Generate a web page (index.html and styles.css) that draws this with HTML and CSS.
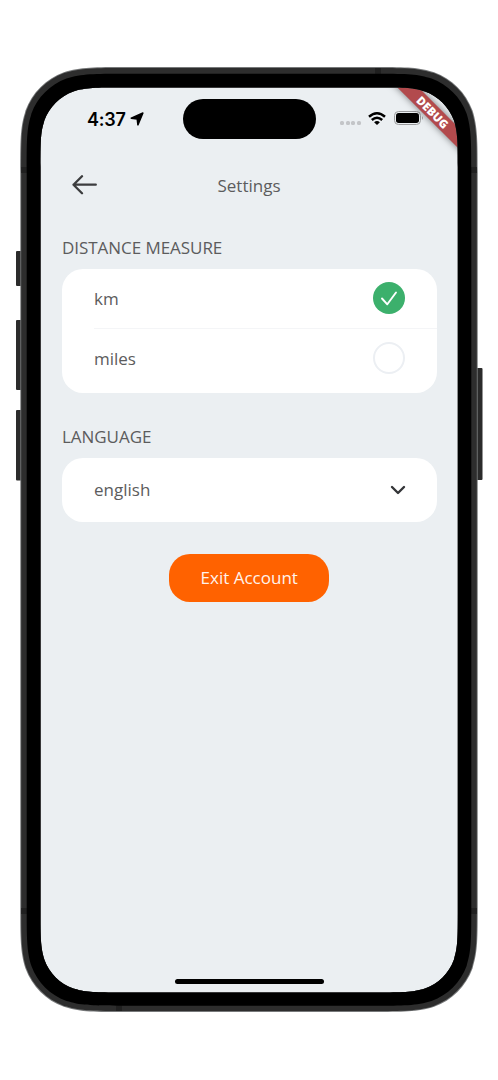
FILE: index.html
```html
<!DOCTYPE html>
<html lang="en">
<head>
<meta charset="utf-8">
<title>Settings</title>
<link rel="stylesheet" href="styles.css">
</head>
<body>
<div class="device">
  <main class="screen">
    <header class="status">
      <div class="status-time">4:37
        <svg class="location" viewBox="0 0 14 14"><path d="M12.900 1 7.900 12.900 7.200 6.900 1.200 6.200Z" stroke="#000" stroke-width="1.500" stroke-linejoin="round"/></svg>
      </div>
      <div class="island"></div>
      <div class="status-icons">
        <span class="cell"><i></i><i></i><i></i><i></i></span>
        <svg class="wifi" viewBox="0 0 18 13"><g fill="none" stroke="#000" stroke-width="2.500"><path d="M1 4.800Q9-2.200 17 4.800"/><path d="M3.800 8Q9 3.400 14.200 8"/></g><path d="M6.100 10.200Q9 7.700 11.900 10.200L9 13Z"/></svg>
        <svg class="battery" viewBox="0 0 30 14"><rect x=".5" y=".5" width="26" height="13" rx="4" fill="none" stroke="#9a9b9d"/><rect x="2" y="2" width="23" height="10" rx="2.700"/><path d="M28 4.800Q29.600 7 28 9.200Z" fill="#888"/></svg>
      </div>
    </header>
    <nav class="bar">
      <svg class="back" viewBox="0 0 26 20"><path d="M23.800 9.700H1.500M10 1.200 1.500 9.700l8.500 8.500"/></svg>
      <h1>Settings</h1>
    </nav>
    <section class="content">
      <h2>DISTANCE MEASURE</h2>
      <div class="card">
        <div class="row"><span>km</span><svg class="radio" viewBox="0 0 32 32"><circle cx="16" cy="16" r="16" fill="#3cb06c"/><path d="m9 16.500 5.300 5.800L23 10.500" fill="none" stroke="#fff" stroke-width="1.900" stroke-linecap="round" stroke-linejoin="round"/></svg></div>
        <div class="divider"></div>
        <div class="row"><span>miles</span><svg class="radio" viewBox="0 0 32 32"><circle cx="16" cy="16" r="15" fill="#fff" stroke="#eceff3" stroke-width="2"/></svg></div>
      </div>
      <h2 class="language">LANGUAGE</h2>
      <div class="card select"><span>english</span><svg class="chevron" viewBox="0 0 16 10"><path d="m2 2 6 6 6-6"/></svg></div>
      <button class="exit">Exit Account</button>
    </section>
    <div class="home"></div>
    <div class="debug">DEBUG</div>
  </main>
  <svg class="frame" viewBox="0 0 498 1080">
    <g fill="#2b2b2b">
      <rect x="16" y="251" width="6" height="35" rx="1"/>
      <rect x="16" y="320" width="6" height="70" rx="1"/>
      <rect x="16" y="410" width="6" height="70.500" rx="1"/>
      <rect x="476" y="368" width="6.500" height="112" rx="1"/>
    </g>
    <path id="edge" fill="#77797a" fill-rule="evenodd"/>
    <path id="body" fill="#2d2d2d" fill-rule="evenodd"/>
    <g fill="#202020">
      <rect x="375" y="68" width="6" height="6"/>
      <rect x="116" y="1005.500" width="6" height="5.500"/>
      <rect x="21.200" y="167" width="6" height="6"/>
      <rect x="471" y="167" width="5.800" height="6"/>
      <rect x="21.200" y="908" width="6" height="6"/>
      <rect x="471" y="908" width="5.800" height="6"/>
    </g>
    <path id="bezel" fill="#000" fill-rule="evenodd"/>
  </svg>
</div>
<script src="frame.js"></script>
</body>
</html>
```
FILE: styles.css
```css
* { box-sizing: border-box; }
body { margin: 0; background: #fff; font-family: "Open Sans", sans-serif; color: #5c5c5d; }
.device { position: relative; width: 498px; height: 1080px; padding: 87px 40px; }
.frame { position: absolute; inset: 0; width: 498px; height: 1080px; pointer-events: none; }
.screen { position: relative; width: 418px; height: 906px; overflow: hidden; background: #ebeff2; clip-path: inset(0 round 44px); }
.status { display: grid; grid-template-columns: 143px 133px 1fr; height: 64px; padding-top: 12px; }
.status-time { display: flex; align-items: center; gap: 4px; height: 40px; padding-left: 47px; font: 600 18px Inter, sans-serif; letter-spacing: -.2px; color: #000; }
.location { width: 14px; height: 14px; }
.island { height: 40px; border-radius: 20px; background: #000; }
.status-icons { display: flex; align-items: center; height: 38px; padding-left: 24px; }
.cell { display: flex; gap: 1.600px; margin: 10px 7.500px 0 0; }
.cell i { width: 4px; height: 4px; border-radius: 1.500px; background: #c3c5c8; }
.wifi { width: 18px; height: 13px; margin-right: 8px; }
.battery { width: 30px; height: 14px; }
.bar { display: grid; grid-template-columns: 32px 1fr 32px; align-items: center; height: 40px; margin: 14px 25px 0 32px; }
.back { width: 26px; height: 20px; fill: none; stroke: #3c3d3f; stroke-width: 2.300; stroke-linecap: round; stroke-linejoin: round; }
h1, h2 { margin: 0; font-weight: 400; }
h1 { font-size: 17px; line-height: 24px; text-align: center; padding: 1px 7px 0 0; }
.content { display: flex; flex-direction: column; padding: 31px 21.500px 0 22px; font-size: 17px; }
h2 { font-size: 17px; line-height: 24px; letter-spacing: -.05px; }
.card { margin-top: 9px; border-radius: 21px; background: #fff; }
.row { display: flex; justify-content: space-between; align-items: center; height: 58.500px; padding: 0 31.500px 0 32px; }
.row:last-child { height: 63.500px; padding-bottom: 5px; }
.radio { width: 32px; height: 32px; }
.divider { height: 1.500px; margin-left: 32px; background: #f4f5f7; }
.language { margin-top: 32px; }
.select { display: flex; align-items: center; justify-content: space-between; height: 64px; padding: 0 31px 0 32px; }
.chevron { width: 16px; height: 10px; fill: none; stroke: #343538; stroke-width: 2.400; stroke-linecap: round; stroke-linejoin: round; }
.exit { align-self: center; width: 160px; height: 48px; margin-top: 32px; padding: 0; border: 0; border-radius: 21px; background: #ff6200; color: #fff3ec; font: 400 17px "Open Sans", sans-serif; }
.home { position: absolute; left: 135px; bottom: 9px; width: 149px; height: 5px; border-radius: 3px; background: #000; }
.debug { position: absolute; left: 324px; top: 17px; width: 136px; height: 15px; padding-left: 2px; transform: rotate(45deg); background: #b24a4d; box-shadow: 0 0 7px rgba(0, 0, 0, .5); color: #fff; font: 800 11.500px/15px "Open Sans", sans-serif; text-align: center; }
```
FILE: frame.js
```js
// Closed path of a rectangle with continuous-curvature corners.
function squircle(x, y, w, h, r) {
  const corner = [[1.52866, 0], [1.08849, 0], [0.86841, 0], [0.66993, 0.0655], [0.63149, 0.07491], [0.37282, 0.16906], [0.16906, 0.37282], [0.07491, 0.63149], [0, 0.86841], [0, 1.08849], [0, 1.52866]];
  const map = [
    (a, b) => [x + w - a * r, y + b * r],
    (a, b) => [x + w - b * r, y + h - a * r],
    (a, b) => [x + a * r, y + h - b * r],
    (a, b) => [x + b * r, y + a * r]
  ];
  return map.map((f, i) => {
    const p = corner.map(([a, b]) => f(a, b).map(v => v.toFixed(2)).join(" "));
    return `${i ? "L" : "M"}${p[0]}C${p[1]} ${p[2]} ${p[3]}L${p[4]}C${p[5]} ${p[6]} ${p[7]}C${p[8]} ${p[9]} ${p[10]}`;
  }).join("") + "Z";
}
const screenPath = squircle(40.5, 87.5, 417.3, 905, 52);
const set = (id, outer) => document.getElementById(id).setAttribute("d", outer + screenPath);
set("edge", squircle(20.3, 67, 457.4, 945, 69));
set("body", squircle(21.2, 68, 455.6, 943, 68));
set("bezel", squircle(26.7, 73.7, 444.6, 932, 63));
```
